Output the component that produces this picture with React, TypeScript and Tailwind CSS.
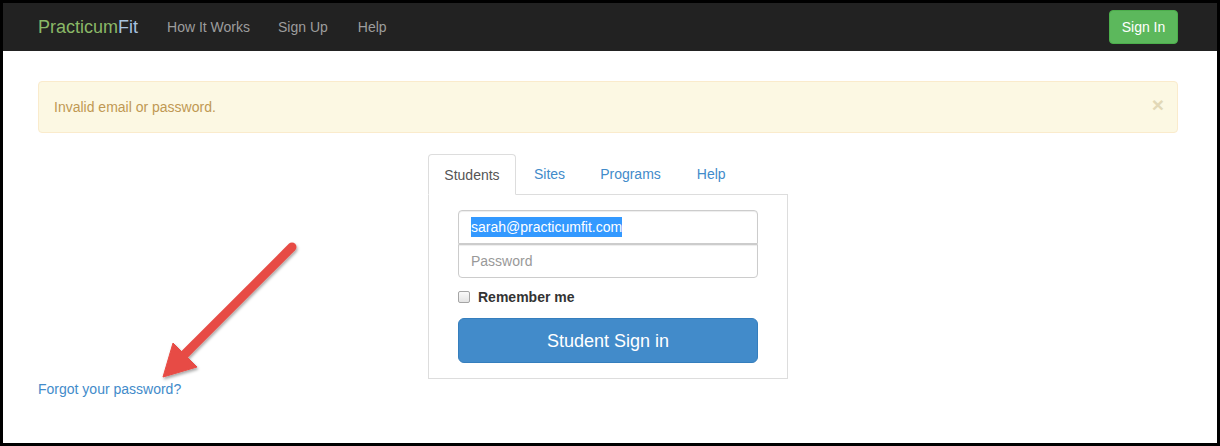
export default function App() {
  return (
    <div className="relative w-[1220px] h-[446px] border-[3px] border-black bg-white text-[14px] leading-[20px] text-[#333] font-['Liberation_Sans',Arial,sans-serif] overflow-hidden">
      {/* Navbar */}
      <nav className="h-[48px] bg-[#222] flex items-center pl-[35px] pr-[39px]">
        <span className="text-[18px] leading-[20px]">
          <span className="text-[#8ab867]">Practicum</span>
          <span className="text-[#a7c3e0]">Fit</span>
        </span>
        <div className="flex ml-[29px] text-[#9d9d9d]">
          <span>How It Works</span>
          <span className="ml-[28px]">Sign Up</span>
          <span className="ml-[30px]">Help</span>
        </div>
        <button className="ml-auto h-[34px] w-[69px] rounded-[4px] bg-[#5cb85c] border border-[#4cae4c] text-white">
          Sign In
        </button>
      </nav>

      {/* Content */}
      <div className="ml-[35px] w-[1140px]">
        <div className="mt-[30px] h-[52px] rounded-[4px] border border-[#faebcc] bg-[#fcf8e3] text-[#c09853] pl-[15px] pr-[15px] flex items-center">
          <span>Invalid email or password.</span>
          <span className="ml-auto -mr-[2px] -mt-[5px] text-[21px] font-bold text-[#e2d8b7] leading-none">×</span>
        </div>

        <div className="w-[360px] mx-auto mt-[21px]">
          <div className="flex border-b border-[#ddd]">
            <div className="-mb-px h-[41px] w-[88px] flex items-center justify-center border border-[#ddd] border-b-white rounded-t-[4px] bg-white text-[#555]">
              Students
            </div>
            <div className="ml-[3px] px-[15px] flex items-center text-[#428bca]">Sites</div>
            <div className="ml-[5px] px-[15px] flex items-center text-[#428bca]">Programs</div>
            <div className="ml-[6px] px-[15px] flex items-center text-[#428bca]">Help</div>
          </div>
          <div className="border border-t-0 border-[#ddd] px-[29px] pt-[15px] pb-[15px]">
            <div className="h-[34px] border border-[#ccc] rounded-t-[4px] flex items-center px-[12px] shadow-[inset_0_1px_1px_rgba(0,0,0,0.075)]">
              <span className="bg-[#3399ff] text-white leading-[20px]">sarah@practicumfit.com</span>
            </div>
            <div className="h-[34px] border border-[#ccc] rounded-b-[4px] flex items-center px-[12px] text-[#999] shadow-[inset_0_1px_1px_rgba(0,0,0,0.075)]">
              Password
            </div>
            <div className="flex items-center mt-[9px] h-[20px]">
              <span className="w-[12px] h-[12px] rounded-[2px] border border-[#a5a5a5] bg-gradient-to-b from-[#fafafa] to-[#e4e4e4]" />
              <span className="ml-[8px] font-bold">Remember me</span>
            </div>
            <button className="mt-[11px] w-full h-[45px] rounded-[6px] bg-[#428bca] border border-[#357ebd] text-white text-[18px]">
              Student Sign in
            </button>
          </div>
        </div>

        <div className="text-[#428bca]">Forgot your password?</div>
      </div>

      {/* Annotation arrow */}
      <svg className="absolute left-0 top-0 pointer-events-none" width="1220" height="446">
        <defs>
          <filter id="sh" x="-20%" y="-20%" width="140%" height="140%">
            <feDropShadow dx="1" dy="2" stdDeviation="1.5" floodColor="#000" floodOpacity="0.35" />
          </filter>
        </defs>
        <g filter="url(#sh)" fill="#e74c45" stroke="#e74c45">
          <line x1="289" y1="244" x2="180" y2="353" strokeWidth="9" strokeLinecap="round" />
          <polygon points="160,374 170,340 194,364" strokeWidth="1" strokeLinejoin="round" />
        </g>
      </svg>
    </div>
  );
}
